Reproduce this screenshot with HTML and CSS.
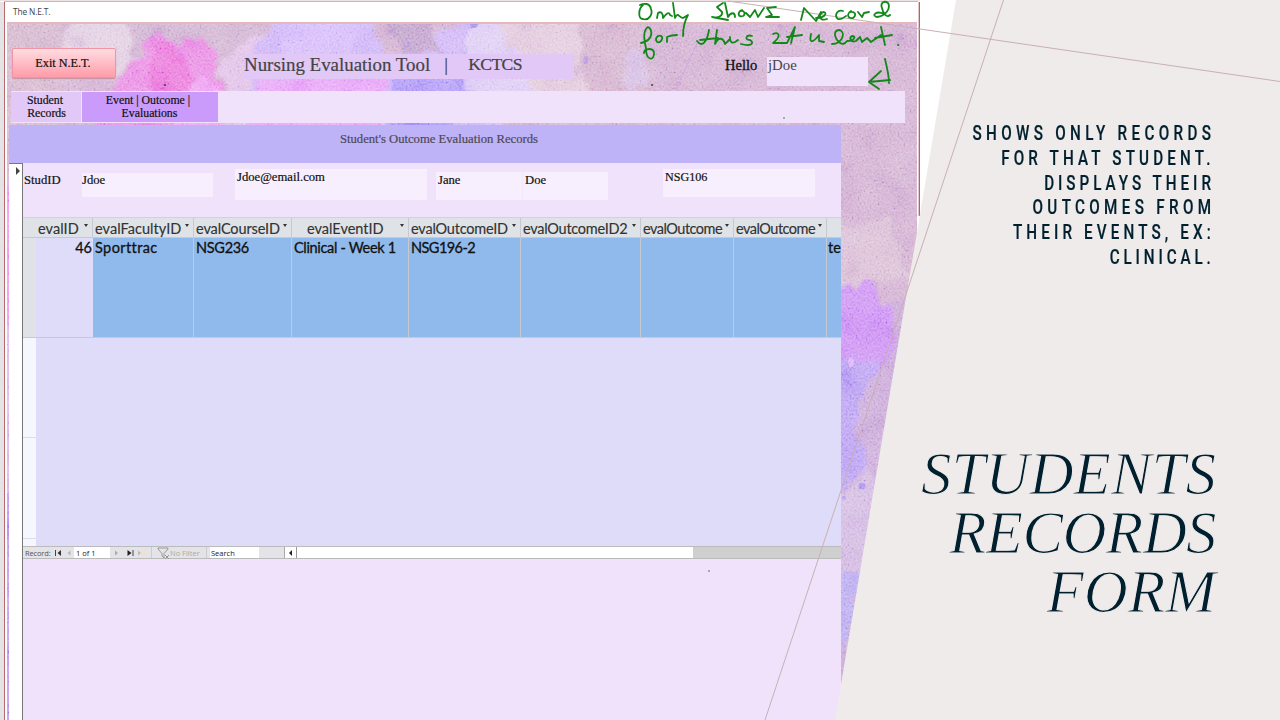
FILE: index.html
```html
<!DOCTYPE html>
<html lang="en">
<head>
<meta charset="utf-8">
<title>Students Records Form</title>
<link rel="stylesheet" href="styles.css">
</head>
<body>
<main class="slide">
  <svg class="art" width="1280" height="720" viewBox="0 0 1280 720" aria-hidden="true">
    <defs>
      <filter id="ragged" x="-20%" y="-20%" width="140%" height="140%">
        <feTurbulence type="fractalNoise" baseFrequency="0.05" numOctaves="5" seed="4"/>
        <feDisplacementMap in="SourceGraphic" scale="20" xChannelSelector="R" yChannelSelector="G"/>
        <feGaussianBlur stdDeviation="1.6"/>
      </filter>
      <filter id="grain" x="0" y="0" width="100%" height="100%">
        <feTurbulence type="fractalNoise" baseFrequency="0.5" numOctaves="3" seed="8"/>
        <feColorMatrix values="1.3 .4 .2 0 -0.5  .9 .8 .2 0 -0.5  .9 .4 .6 0 -0.5  0 0 0 0 1"/>
      </filter>
      <filter id="stone" x="0" y="0" width="100%" height="100%">
        <feTurbulence type="fractalNoise" baseFrequency="0.035" numOctaves="5" seed="21"/>
        <feColorMatrix values="1.6 0 0 0 -0.3  1.6 0 0 0 -0.3  1.2 0 0 0 -0.1  0 0 0 0 1"/>
      </filter>
      <clipPath id="canvas"><rect x="7" y="24" width="910" height="696"/></clipPath>
    </defs>
    <g clip-path="url(#canvas)">
      <rect x="7" y="24" width="910" height="696" fill="#cfabce"/>
      <g filter="url(#ragged)">
        <path d="M5 15H65V130H5Z" fill="#d2b2ca"/>
        <path d="M75 15 130 15 140 60 110 80 60 60Z" fill="#dfcadf"/>
        <path d="M130 10H260V60H130Z" fill="#cdadce"/>
        <path d="M95 135 118 80 137 62 146 42 158 30 175 44 195 36 212 50 220 70 216 135Z" fill="#e888e2"/>
        <path d="M150 110 152 48 165 40 185 60 198 90 190 110Z" fill="#e970d8"/>
        <path d="M175 135 186 84 205 78 222 92 222 135Z" fill="#ee9bf1"/>
        <path d="M222 60 262 30 250 130 224 130Z" fill="#dfbde6"/>
        <path d="M246 100 262 30 290 10 370 10 385 60 480 10 505 60 500 130 246 130Z" fill="#cbaff5"/>
        <path d="M280 55 290 15 365 10 345 62Z" fill="#d3b7f9"/>
        <path d="M378 12 432 12 436 54 404 52Z" fill="#bd9cc8"/>
        <path d="M246 135 255 80 300 76 390 75 380 130Z" fill="#e59df6"/>
        <path d="M394 70 467 70 455 130 390 130Z" fill="#ab93f6"/>
        <path d="M470 18 492 18 530 60 548 98 465 98Z" fill="#dac7f3"/>
        <path d="M492 12 580 12 590 98 545 98 515 60Z" fill="#dfc4d9"/>
        <path d="M580 12 640 12 650 98 585 98Z" fill="#d1adca"/>
        <ellipse cx="634" cy="68" rx="11" ry="26" fill="#d2b8e0"/>
        <path d="M5 180h12v170H5z" fill="#ef8ff1"/>
        <path d="M5 330h12v170H5z" fill="#e2b0ee"/>
        <path d="M5 490h12v240H5z" fill="#b98df3"/>
        <path d="M836 300H925V720H836Z" fill="#c6a3d5"/>
        <path d="M836 225 890 220 905 275 860 288 836 280Z" fill="#d7b8d1"/>
        <path d="M832 292 850 278 856 290 866 283 876 286 878 300 888 302 893 320 893 350 880 368 862 385 850 440 832 470Z" fill="#c98bf2"/>
        <path d="M832 360 882 362 860 395 856 440 872 464 850 480 832 500Z" fill="#b69af1"/>
        <path d="M836 505 870 465 880 500 865 570 836 570Z" fill="#d0b5df"/>
        <path d="M832 572 860 570 850 640 832 655Z" fill="#b5a3ee"/>
      </g>
      <ellipse cx="851" cy="362" rx="3" ry="5" fill="#d8aefa"/>
      <g fill="#a78bee"><circle cx="862" cy="486" r="3.500"/><circle cx="844" cy="498" r="2"/><circle cx="409" cy="44" r="2"/><path d="M470 24h9l-3 4h-6z"/><ellipse cx="586" cy="60" rx="2.500" ry="4" fill="#b795dc"/></g>
      <path d="M697 43 676 90M715 85l6-7" stroke="#c990e0" fill="none"/>
      <rect class="stone" x="7" y="24" width="910" height="696" filter="url(#stone)"/>
      <rect class="grain" x="7" y="24" width="910" height="696" filter="url(#grain)"/>
    </g>
    <path d="M4 1.5H918" stroke="#dcaeb2" fill="none"/>
    <path d="M0 0H920V1H0Z" fill="#eee2e4"/>
    <path d="M0 2H4V720H0Z" fill="#e4e3e5"/>
    <path d="M4.5 2V720" stroke="#b9686c" fill="none"/>
    <path d="M7 23H917" stroke="#dca1a9" stroke-width="1.4" fill="none"/>
    <path d="M919.3 2V216" stroke="#b25a60" stroke-width="1.3" fill="none"/>
  </svg>

  <section class="app">
    <header class="titlebar">The N.E.T.</header>
    <div class="banner">
      <button class="exit">Exit N.E.T.</button>
      <h1 class="name"><span>Nursing Evaluation Tool</span><span class="bar">|</span><span class="org">KCTCS</span></h1>
      <label class="hello">Hello</label>
      <div class="user">jDoe</div>
    </div>
    <nav class="tabs">
      <div class="tab tab-records">Student<br>&nbsp;Records</div>
      <div class="tab tab-events">Event | Outcome |<br>&nbsp;Evaluations</div>
    </nav>
    <div class="form">
      <h2 class="form-title">Student's Outcome Evaluation Records</h2>
      <div class="form-body">
        <div class="selector"><svg width="5" height="8"><path d="M0 0 4 4 0 8Z" fill="#444"/></svg></div>
        <div class="detail">
          <div class="fields">
            <span class="label">StudID</span>
            <span class="field f-id">Jdoe</span>
            <span class="field f-mail">Jdoe@email.com</span>
            <span class="field f-first">Jane</span>
            <span class="field f-last">Doe</span>
            <span class="field f-course">NSG106</span>
          </div>
          <div class="sheet">
            <div class="row head">
              <div></div><div><b class="w1">evalID</b></div><div><b class="w2">evalFacultyID</b></div><div><b class="w3">evalCourseID</b></div><div><b class="w4">evalEventID</b></div><div><b class="w5">evalOutcomeID</b></div><div><b class="w6">evalOutcomeID2</b></div><div><b class="w7">evalOutcome</b></div><div><b class="w7">evalOutcome</b></div><div></div>
            </div>
            <div class="row data">
              <div></div><div class="num">46</div><div><span class="d1">Sporttrac</span></div><div><span class="d2">NSG236</span></div><div><span class="d3">Clinical - Week 1</span></div><div><span class="d4">NSG196-2</span></div><div></div><div></div><div></div><div class="cut">te</div>
            </div>
            <div class="empty"><div class="gutter"></div></div>
          </div>
          <footer class="recnav">
            <span class="rec">Record:</span>
            <svg class="arrows" width="22" height="12"><path d="M3.500 3V9" stroke="#444"/><path d="M9 3 5.500 6 9 9Z" fill="#333"/><path d="M18.500 3.5 15.500 6 18.500 8.5Z" fill="#b5b5b5"/></svg>
            <span class="pos">1 of 1</span>
            <svg class="arrows" width="41" height="12"><path d="M4 3.500 7 6 4 8.500Z" fill="#aaa"/><path d="M16.500 3 20.500 6 16.500 9Z" fill="#222"/><path d="M22 3V9" stroke="#444"/><path d="M27 3.500 30 6 27 8.500Z" fill="#bbb"/><path d="M31 4H35V9H31Z" fill="#f3e2bd"/></svg>
            <span class="filter"><svg width="13" height="12"><path d="M1 1H11V2L7 6.500V11L5 9V6.500L1 2ZM8 8l4 4m0-4-4 4" stroke="#999" fill="none"/></svg>No Filter</span>
            <span class="search">Search</span>
            <span class="back"><svg width="5" height="8"><path d="M4 1 1 4 4 7Z" fill="#222"/></svg></span>
            <span class="track"></span>
          </footer>
        </div>
      </div>
    </div>
  </section>

  <svg class="overlay" width="1280" height="720" viewBox="0 0 1280 720" aria-hidden="true">
    <path d="M956 0H1280V720H835Z" fill="#efebea"/>
    <path d="M1003.500 0 765 720M728 1 1280 81.500" stroke="#c9b0b4" fill="none"/>
    <g stroke="#13881a" stroke-width="1.8" fill="none" stroke-linecap="round" stroke-linejoin="round">
      <path d="M643 5C638 9 638 19 643 19C649 21 653 14 651 9C650 3 644 3 640 5M657 18 658 13C661 11 663 13 663 18C666 14 669 11 670 15L672 16M673 3 675 18C678 11 679 18 683 18L688 15C684 22 683 28 683 36"/>
      <path d="M723 3 717 7 722 12C723 17 716 18 712 17L728 20M725 3 728 17C731 12 735 12 735 17M742 10C737 12 738 18 743 16C746 14 744 10 741 11M746 13 750 17 755 10 758 17 764 8M776 7 767 8 772 15 766 17H779"/>
      <path d="M801 20 804 8 816 21 821 12M816 18C823 19 828 13 824 12C818 13 818 22 827 19M843 11C837 9 834 16 838 19C842 20 844 17 846 16M851 11C846 14 848 19 853 18C857 15 855 11 850 12M858 12 862 17 864 13 869 12M884 14C876 10 871 16 877 17C886 16 891 8 888 3C884 0 880 3 882 8C883 14 887 18 890 15"/>
      <path d="M641 43C655 40 652 28 648 27C643 30 644 40 646 48C646 62 655 61 654 52C652 47 644 49 644 53M658 36C654 39 657 45 661 41C664 37 661 34 657 37M667 42V37C671 35 674 35 677 35"/>
      <path d="M697 41C702 48 707 42 709 30M700 40 718 38M717 30 715 44C718 37 723 37 725 44L730 39M730 37C730 44 733 44 738 40M752 36C746 34 744 40 750 40C755 43 751 47 741 44"/>
      <path d="M773 34C780 31 781 37 773 43L787 43 795 27 791 43M787 37 802 35M811 34C809 43 812 44 819 35L819 41 824 42M832 44C842 44 846 33 840 30C833 30 834 37 839 42C842 45 845 44 847 41C854 41 857 36 852 36C849 38 850 43 856 41L860 37 862 42 867 38 871 42 881 35M881 27 885 45M875 38 892 35M898 45h.4"/>
      <path d="M885 59C887 68 889 75 889 83M869 82 890 80M881 71 869 82 879 89"/>
    </g>
    <circle cx="784" cy="118" r=".8" fill="#13881a"/><circle cx="709" cy="571" r=".8" fill="#555"/><circle cx="652" cy="85" r=".9" fill="#333"/><circle cx="165" cy="85" r=".9" fill="#333"/>
  </svg>

  <aside class="caption">
    <p class="desc"><span class="l1">SHOWS ONLY RECORDS</span><span class="l2">FOR THAT STUDENT.</span><span class="l3">DISPLAYS THEIR</span><span class="l4">OUTCOMES FROM</span><span class="l5">THEIR EVENTS, EX:</span><span class="l6">CLINICAL.</span></p>
    <h1 class="title">STUDENTS<br><span class="t2">RECORDS</span><br>FORM</h1>
  </aside>
</main>
</body>
</html>
```

FILE: styles.css
```css
* { box-sizing: border-box; }
body { margin: 0; }
.slide { position: relative; width: 1280px; height: 720px; overflow: hidden; background: #fff; display: flex; justify-content: space-between; font-family: "Liberation Serif", serif; }
.art, .overlay { position: absolute; left: 0; top: 0; }
.stone { mix-blend-mode: soft-light; opacity: .3; }
.grain { mix-blend-mode: soft-light; opacity: .8; }

.app { position: relative; width: 905px; height: 720px; padding-left: 9px; display: flex; flex-direction: column; flex: none; }
.titlebar { height: 24px; flex: none; padding: 5px 0 0 4px; font: 8.4px/14px "Open Sans", sans-serif; color: #444; letter-spacing: -.15px; }
.banner { height: 67px; flex: none; display: flex; padding-left: 3px; }
.exit { margin: 24px 0 0; padding: 0 2px 0 0; width: 104px; height: 30px; border: 1px solid #f195a5; border-radius: 2px; background: linear-gradient(#ffdde1, #ff9ca9); font: 12.2px/28px "Liberation Serif", serif; color: #111; box-shadow: 0 1px 1px #c58fa0; -webkit-text-stroke: .2px #111; }
.name { margin: 30px 0 0 128px; width: 330px; height: 25px; background: #e2c8f7; color: #444; font-weight: 400; font-size: 18.9px; line-height: 21px; white-space: nowrap; display: flex; -webkit-text-stroke: .2px #444; }
.bar { margin-left: 14px; width: 24px; }
.org { font-size: 17.6px; letter-spacing: -.6px; }
.hello { margin: 32px 0 0 151px; width: 42px; font-size: 14.5px; line-height: 18px; color: #111; -webkit-text-stroke: .3px #111; }
.user { margin-top: 33px; width: 101px; height: 29px; background: #f0e2fb; padding-left: 1px; font-size: 14.8px; line-height: 17px; color: #444; }
.tabs { height: 32px; flex: none; margin-left: 2px; background: #f0e2fb; display: flex; padding: 1px 0; gap: 1px; color: #111; font-size: 11.8px; line-height: 13px; text-align: center; -webkit-text-stroke: .2px #111; }
.tab { padding-top: 2px; height: 30px; }
.tab-records { width: 70px; background: #e2c8f7; padding-right: 2px; }
.tab-events { width: 136px; background: #cb9bfc; padding-right: 4px; }
.form { margin-top: 2px; width: 832px; flex: 1; background: #f0e2fb; display: flex; flex-direction: column; }
.form-title { margin: 0; height: 38px; flex: none; background: #beb3f7; color: #4d4858; text-align: center; font-weight: 400; font-size: 12.66px; line-height: 28px; padding-left: 28px; -webkit-text-stroke: .2px #4d4858; }
.form-body { flex: 1; display: flex; }
.selector { width: 14px; flex: none; background: #fff; border-top: 1px solid #777; border-right: 1px solid #777; padding: 3px 0 0 7px; line-height: 0; }
.detail { width: 818px; overflow: hidden; }
.fields { height: 54px; display: flex; align-items: flex-start; font-size: 12.66px; line-height: 14px; color: #111; -webkit-text-stroke: .2px #111; }
.label { width: 59px; padding: 10px 0 0 1px; }
.field { background: #f7effd; padding: 1px 0 0 2px; }
.f-id { margin-top: 10px; width: 131px; height: 24px; padding: 0; }
.f-mail { margin: 6px 0 0 22px; width: 192px; height: 31px; }
.f-first { margin: 9px 0 0 9px; width: 86px; height: 28px; }
.f-last { margin-top: 9px; width: 86px; height: 28px; border-left: 1px solid #f1e8fa; }
.f-course { margin: 6px 0 0 55px; width: 152px; height: 28px; font-size: 12.1px; }

.sheet { height: 329px; background: #dfdcf9; font: 14.5px/21px Lato, sans-serif; color: #111; display: flex; flex-direction: column; white-space: nowrap; }
.row { display: grid; grid-template-columns: 13px 57px 101px 98px 117px 112px 120px 93px 93px 14px; }
.row > div { position: relative; overflow: hidden; border-right: 1px solid #c5cad0; padding-left: 2px; }
.row > div:last-child { border: 0; }
.head { height: 20px; background: #dfe3e8; border-top: 1px solid #cfd2d7; color: #333; -webkit-text-stroke: .15px #333; }
.head b { font-weight: 400; }
.head b::after { content: ""; position: absolute; right: 4px; top: 6px; border: 2.5px solid transparent; border-top: 3px solid #333; border-bottom: 0; }
.data { height: 101px; line-height: 20px; background: #90b9ec; border-top: 1px solid #c5cad0; border-bottom: 1px solid #c5cad0; -webkit-text-stroke: .3px #111; }
.data > div:first-child { background: #dfe3e8; border: 0; }
.head > div:first-child { border: 0; }
.data .num { background: #dfdcf9; text-align: right; border: 0; padding-right: 1px; }
.w1 { letter-spacing: .05px; }
.w2 { letter-spacing: .05px; }
.w3 { letter-spacing: -.1px; }
.w4 { padding-left: 13px; }
.w5 { letter-spacing: -.2px; }
.w6 { letter-spacing: -.25px; }
.w7 { letter-spacing: -.5px; }
.d1 { letter-spacing: .4px; }
.d2 { letter-spacing: -.3px; }
.d3 { letter-spacing: -.33px; }
.d4 { letter-spacing: -.55px; }
.data .cut { padding-left: 1px; }
.empty { flex: 1; }
.gutter { width: 13px; height: 100%; background: linear-gradient(#dcdcea, #dcdcea) 0 99px / 100% 1px no-repeat, linear-gradient(#dcdcea, #dcdcea) 0 200px / 100% 1px no-repeat, #f6f6ff; }

.recnav { height: 13px; display: flex; background: #e4e3e7; border-top: 1px solid #bbb; border-bottom: 1px solid #bbb; font: 7.5px/12px "Open Sans", sans-serif; color: #222; white-space: nowrap; }
.rec { width: 28px; padding-left: 2px; color: #555; letter-spacing: -.15px; }
.arrows { margin-left: 1px; flex: none; }
.pos { width: 36px; background: #fff; padding-left: 2px; }
.filter { width: 56px; margin-left: -1px; padding-left: 5px; border-left: 1px solid #ccc; border-right: 1px solid #ccc; color: #aaa; display: flex; }
.search { margin-left: 3px; width: 49px; background: #fff; padding-left: 1px; }
.back { margin-left: 25px; width: 12px; background: #fff; border-left: 1px solid #aaa; padding: 2px 0 0 3px; line-height: 0; }
.track { flex: 1; border-left: 1px solid #999; background: linear-gradient(90deg, #fff 396px, #cfcfcf 396px); }

.caption { position: relative; width: 375px; padding: 122px 63px 0 0; text-align: right; color: #00202f; }
.desc { margin: 0; height: 322px; padding-right: 2px; display: flex; flex-direction: column; align-items: flex-end; font: 500 19.5px/24.8px Roboto, sans-serif; white-space: nowrap; -webkit-text-stroke: .2px #00202f; }
.desc span { transform: scaleX(.78); transform-origin: right; letter-spacing: 5.3px; }
.desc .l1, .desc .l4 { letter-spacing: 5.55px; }
.desc .l3 { letter-spacing: 5.1px; }
.desc .l6 { letter-spacing: 5px; }
.title { margin: 0; padding-right: 1px; font: italic 400 61px/59px "Liberation Serif", serif; -webkit-text-stroke: 1.1px #efebea; }
.t2 { letter-spacing: -.6px; }
```
